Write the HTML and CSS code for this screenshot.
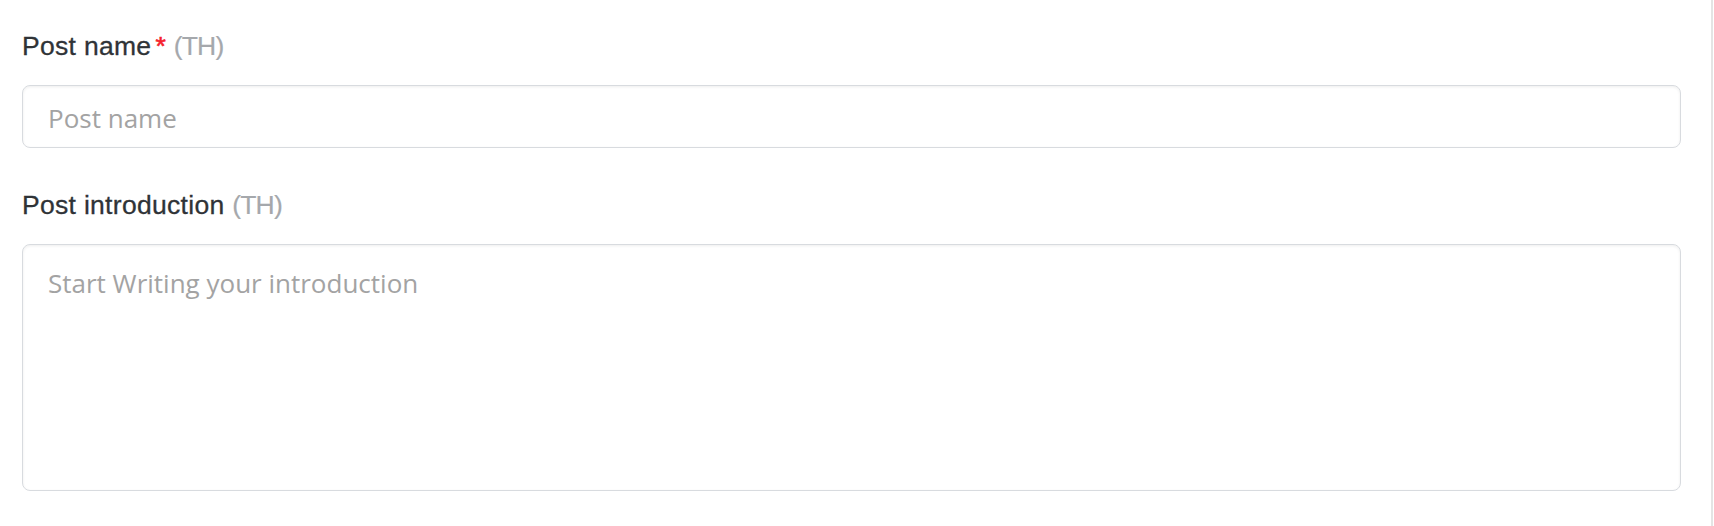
FILE: index.html
```html
<!DOCTYPE html>
<html lang="en">
<head>
<meta charset="utf-8">
<title>Post form</title>
<link rel="stylesheet" href="styles.css">
</head>
<body>
<div class="page">
  <form class="form">
    <div class="field">
      <label class="label" for="post-name">Post name<span class="req">*</span> <span class="lang">(TH)</span></label>
      <input class="control input" id="post-name" type="text" placeholder="Post name">
    </div>
    <div class="field">
      <label class="label" for="post-intro">Post introduction <span class="lang">(TH)</span></label>
      <textarea class="control textarea" id="post-intro" placeholder="Start Writing your introduction"></textarea>
    </div>
  </form>
</div>
</body>
</html>
```

FILE: styles.css
```css
html, body {
  margin: 0;
  padding: 0;
  background: #ffffff;
}

.page {
  width: 1711px;
  min-height: 526px;
  border-right: 2px solid #e4e4e4;
  box-sizing: content-box;
}

.form {
  display: flex;
  flex-direction: column;
  gap: 39px;
  padding: 28px 30px 0 22px;
}

.field {
  display: flex;
  flex-direction: column;
  gap: 21px;
}

.label {
  font-family: "Liberation Sans", Arial, sans-serif;
  font-size: 26.5px;
  line-height: 36px;
  letter-spacing: 0.3px;
  color: #2f3337;
  -webkit-text-stroke: 0.3px #2f3337;
}

.req {
  color: #f5222d;
  -webkit-text-stroke: 0.6px #f5222d;
  margin-left: 4px;
}

.lang {
  color: #a5a8ac;
  letter-spacing: -0.8px;
  -webkit-text-stroke: 0.2px #a5a8ac;
}

.control {
  display: block;
  width: 100%;
  box-sizing: border-box;
  border: 1px solid #d8dbdf;
  border-radius: 8px;
  background: #fff;
  box-shadow: inset 0 1px 3px rgba(0, 0, 0, 0.07);
  font-family: "Open Sans", "Noto Sans", sans-serif;
  font-size: 26px;
  color: #333;
  outline: none;
  margin: 0;
}

.control::placeholder {
  color: #a3a3a3;
  opacity: 1;
}

.input {
  height: 63px;
  padding: 2px 25px 0;
  line-height: 59px;
}

.textarea {
  height: 247px;
  padding: 19px 25px 16px;
  line-height: 38px;
  resize: none;
}
```
